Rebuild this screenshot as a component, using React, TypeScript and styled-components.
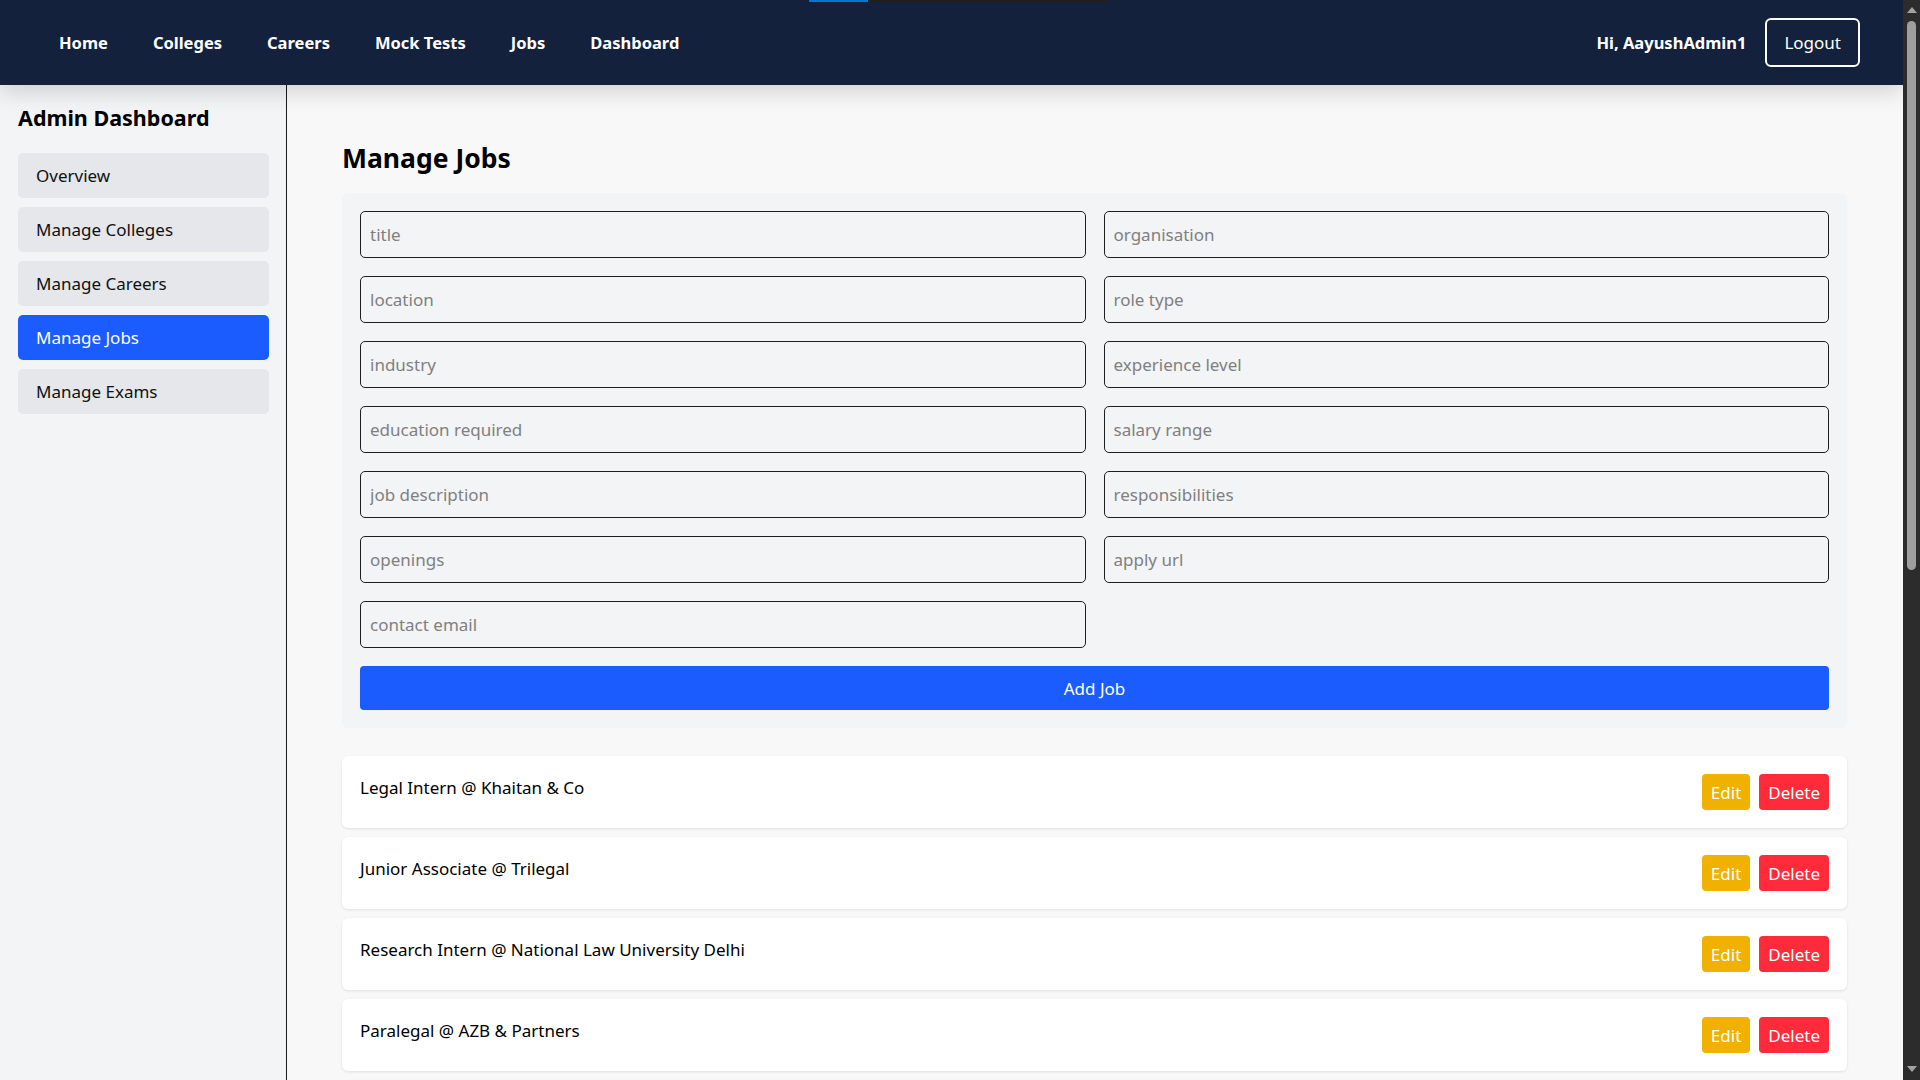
import React from 'react'
import styled, { createGlobalStyle } from 'styled-components'

const GlobalStyle = createGlobalStyle`
  html, body {
    margin: 0;
    padding: 0;
  }
  body {
    font-family: "Noto Sans", "Open Sans", sans-serif;
    background: #f8f8f8;
    color: #111;
  }
  * {
    box-sizing: border-box;
  }
`

const navLinks = ['Home', 'Colleges', 'Careers', 'Mock Tests', 'Jobs', 'Dashboard']
const sideLinks = ['Overview', 'Manage Colleges', 'Manage Careers', 'Manage Jobs', 'Manage Exams']
const fields = [
  'title',
  'organisation',
  'location',
  'role type',
  'industry',
  'experience level',
  'education required',
  'salary range',
  'job description',
  'responsibilities',
  'openings',
  'apply url',
  'contact email',
]
const jobs = [
  'Legal Intern @ Khaitan & Co',
  'Junior Associate @ Trilegal',
  'Research Intern @ National Law University Delhi',
  'Paralegal @ AZB & Partners',
]

export default function App() {
  return (
    <>
      <GlobalStyle />
      <TopIndicator>
        <span />
      </TopIndicator>
      <Page>
        <NavBar>
          <NavList>
            {navLinks.map((l) => (
              <NavLink key={l}>{l}</NavLink>
            ))}
          </NavList>
          <UserArea>
            <Greeting>Hi, AayushAdmin1</Greeting>
            <LogoutButton>Logout</LogoutButton>
          </UserArea>
        </NavBar>
        <Layout>
          <Sidebar>
            <SideTitle>Admin Dashboard</SideTitle>
            <SideMenu>
              {sideLinks.map((l) => (
                <SideItem key={l} $active={l === 'Manage Jobs'}>
                  {l}
                </SideItem>
              ))}
            </SideMenu>
          </Sidebar>
          <Main>
            <PageTitle>Manage Jobs</PageTitle>
            <FormCard>
              <FieldGrid>
                {fields.map((f) => (
                  <Input key={f} placeholder={f} />
                ))}
              </FieldGrid>
              <AddButton>Add Job</AddButton>
            </FormCard>
            <JobList>
              {jobs.map((j) => (
                <JobRow key={j}>
                  <JobName>{j}</JobName>
                  <Actions>
                    <ActionButton $tone="edit">Edit</ActionButton>
                    <ActionButton $tone="delete">Delete</ActionButton>
                  </Actions>
                </JobRow>
              ))}
            </JobList>
          </Main>
        </Layout>
      </Page>
      {/* window scrollbar, as it shows in the screenshot */}
      <ScrollTrack>
        <Arrow $dir="up" />
        <Thumb />
        <Arrow $dir="down" />
      </ScrollTrack>
    </>
  )
}

const TopIndicator = styled.div`
  position: fixed;
  top: 0;
  left: 809px;
  width: 301px;
  height: 2px;
  background: #1f1f1f;
  z-index: 10;

  & > span {
    display: block;
    width: 59px;
    height: 100%;
    background: #0078d4;
  }
`

const Page = styled.div`
  margin-right: 17px;
`

const ScrollTrack = styled.div`
  position: fixed;
  top: 0;
  right: 0;
  bottom: 0;
  width: 17px;
  padding: 7px 0 8px;
  display: flex;
  flex-direction: column;
  align-items: center;
  background: #2c2c2c;
  z-index: 20;
`

const Thumb = styled.div`
  width: 9px;
  height: 549px;
  margin-top: 8px;
  margin-bottom: auto;
  border-radius: 5px;
  background: #9f9f9f;
`

const Arrow = styled.div<{ $dir: 'up' | 'down' }>`
  width: 0;
  height: 0;
  border-left: 5px solid transparent;
  border-right: 5px solid transparent;
  ${(p) =>
    p.$dir === 'up' ? 'border-bottom: 6px solid #a3a3a3;' : 'border-top: 6px solid #a3a3a3;'}
`

const NavBar = styled.header`
  position: relative;
  z-index: 2;
  height: 85px;
  padding: 0 43px 0 59px;
  display: flex;
  align-items: center;
  justify-content: space-between;
  background: #13213c;
  box-shadow: 0 6px 22px rgba(0, 0, 0, 0.16);
`

const NavList = styled.nav`
  display: flex;
  align-items: center;
  gap: 45px;
`

const NavLink = styled.a`
  color: #fff;
  font-size: 16.5px;
  font-weight: 700;
  cursor: pointer;
`

const UserArea = styled.div`
  display: flex;
  align-items: center;
  gap: 19px;
`

const Greeting = styled.span`
  color: #fff;
  font-size: 16.5px;
  font-weight: 700;
`

const LogoutButton = styled.button`
  height: 49px;
  padding: 0 17px;
  border: 2px solid #fff;
  border-radius: 6px;
  background: transparent;
  color: #fff;
  font-family: inherit;
  font-size: 17px;
  cursor: pointer;
`

const Layout = styled.div`
  display: flex;
  align-items: stretch;
  min-height: calc(100vh - 85px);
`

const Sidebar = styled.aside`
  width: 287px;
  flex-shrink: 0;
  padding: 18px 17px 18px 18px;
  background: #f3f4f6;
  border-right: 1px solid #1a1a1a;
`

const SideTitle = styled.h3`
  margin: 0 0 20px;
  font-size: 21.5px;
  line-height: 30px;
  font-weight: 700;
  color: #000;
`

const SideMenu = styled.div`
  display: flex;
  flex-direction: column;
  gap: 9px;
`

const SideItem = styled.div<{ $active?: boolean }>`
  height: 45px;
  padding: 0 18px;
  display: flex;
  align-items: center;
  border-radius: 5px;
  font-size: 17px;
  background: ${(p) => (p.$active ? '#1a5cff' : '#e5e7eb')};
  color: ${(p) => (p.$active ? '#fff' : '#111')};
  cursor: pointer;
`

const Main = styled.main`
  flex: 1;
  padding: 55px 56px 40px 55px;
  background: #f8f8f8;
`

const PageTitle = styled.h2`
  margin: 0 0 16px;
  font-size: 26.5px;
  line-height: 37px;
  font-weight: 700;
  color: #000;
`

const FormCard = styled.div`
  padding: 18px;
  background: #f3f4f6;
  border-radius: 6px;
`

const FieldGrid = styled.div`
  display: grid;
  grid-template-columns: 1fr 1fr;
  column-gap: 18px;
  row-gap: 18px;
`

const Input = styled.input`
  height: 47px;
  padding: 0 9px;
  border: 1.5px solid #1e1e1e;
  border-radius: 5px;
  background: transparent;
  font-family: inherit;
  font-size: 17px;
  color: #111;
  outline: none;

  &::placeholder {
    color: #808080;
  }
`

const AddButton = styled.button`
  width: 100%;
  height: 44px;
  margin-top: 18px;
  border: none;
  border-radius: 4px;
  background: #1a5cff;
  color: #fff;
  font-family: inherit;
  font-size: 17px;
  cursor: pointer;
`

const JobList = styled.div`
  margin-top: 28px;
  display: flex;
  flex-direction: column;
  gap: 9px;
`

const JobRow = styled.div`
  padding: 18px;
  display: flex;
  justify-content: space-between;
  background: #fff;
  border-radius: 6px;
  box-shadow: 0 1px 3px rgba(0, 0, 0, 0.1);
`

const JobName = styled.span`
  padding-top: 2px;
  font-size: 17px;
  line-height: 24px;
  color: #000;
`

const Actions = styled.div`
  display: flex;
  gap: 9px;
`

const ActionButton = styled.button<{ $tone: 'edit' | 'delete' }>`
  height: 36px;
  padding: 0 9px;
  border: none;
  border-radius: 4px;
  background: ${(p) => (p.$tone === 'edit' ? '#f0b100' : '#ff2b3a')};
  color: #fff;
  font-family: inherit;
  font-size: 17px;
  cursor: pointer;
`
